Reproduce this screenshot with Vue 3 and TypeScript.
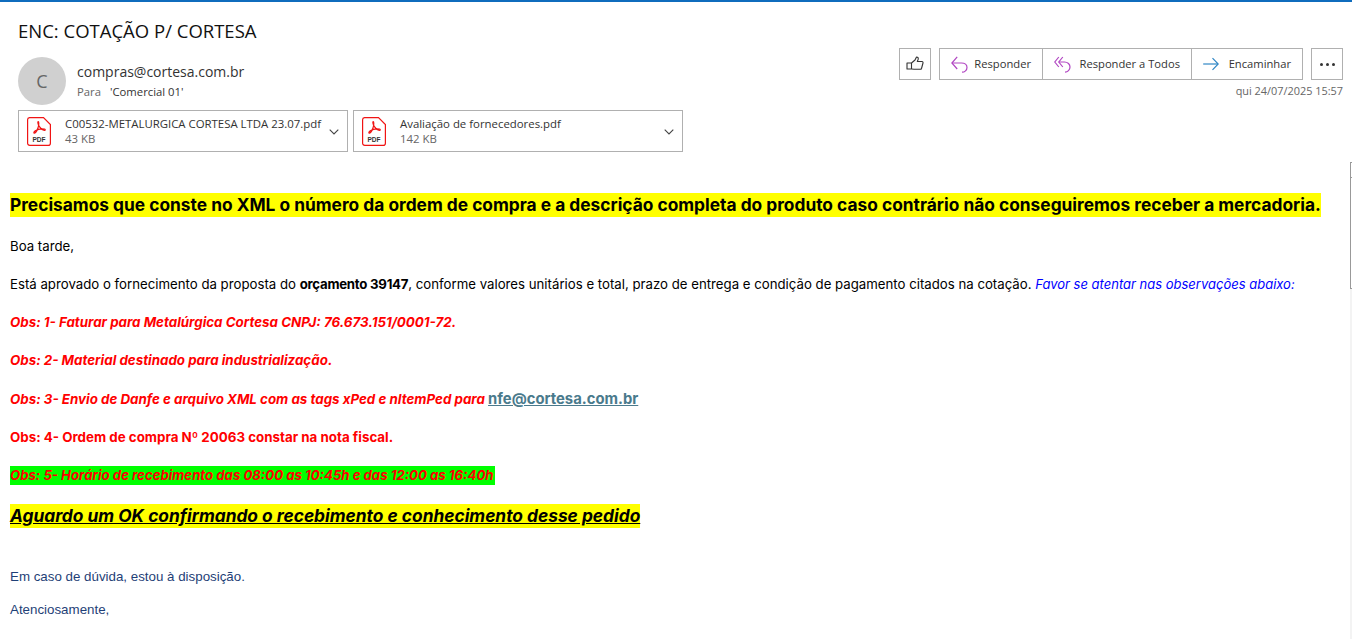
<script setup lang="ts">
interface Att { name: string; size: string }
const atts: Att[] = [
  { name: 'C00532-METALURGICA CORTESA LTDA 23.07.pdf', size: '43 KB' },
  { name: 'Avaliação de fornecedores.pdf', size: '142 KB' },
]
</script>

<template>
  <div class="page">
    <header class="head">
      <div class="head-left">
        <h1 class="subject">ENC: COTAÇÃO P/ CORTESA</h1>
        <div class="sender">
          <div class="avatar">C</div>
          <div class="who">
            <div class="from">compras@cortesa.com.br</div>
            <div class="to"><span class="para">Para</span><span>'Comercial 01'</span></div>
          </div>
        </div>
      </div>
      <div class="head-right">
        <div class="actions">
          <button class="btn square">
            <svg width="18" height="16" viewBox="0 0 18 16" fill="#fafafa" stroke="#333" stroke-width="1.1" stroke-linejoin="round"><path d="M1 7h4.500l3.500-3 1.500-3c1.500 0 2 1 1.700 2.200L11.300 5.500H16c.8 0 1.200.8 1 1.500l-1.500 5.500c-.2.600-.6.800-1.200.8H8L5.500 13H1z"/><path d="M5.500 7v6"/></svg>
          </button>
          <div class="group">
            <button class="btn seg s1">
              <svg width="17" height="17" viewBox="0 0 17 17" fill="none" stroke="#b146c2" stroke-width="1.200"><path d="M6.200 .8 .9 7l5.300 6"/><path d="M.9 7H10.500c3.300 0 5.500 2 5.500 4.400 0 2.700-2.300 4.800-5 4.800"/></svg>
              <span>Responder</span>
            </button>
            <button class="btn seg s2">
              <svg width="17" height="17" viewBox="0 0 17 17" fill="none" stroke="#b146c2" stroke-width="1.200"><path d="M4.800 1 .8 6l4 5"/><path d="M8.800 1 4.800 6l4 5"/><path d="M4.800 6H10.500c3.300 0 5.500 2.400 5.500 5 0 2.800-2.300 5.200-5 5.200"/></svg>
              <span>Responder a Todos</span>
            </button>
            <button class="btn seg s3">
              <svg width="16" height="14" viewBox="0 0 16 14" fill="none" stroke="#2f86c5" stroke-width="1.200"><path d="M.2 7H15"/><path d="M9.500 1.200 15.200 7l-5.700 5.800"/></svg>
              <span>Encaminhar</span>
            </button>
          </div>
          <button class="btn square more" aria-label="Mais"><i></i><i></i><i></i></button>
        </div>
        <div class="date">qui 24/07/2025 15:57</div>
      </div>
    </header>

    <div class="attachments">
      <div v-for="a in atts" :key="a.name" class="att">
        <svg class="pdf" width="24" height="29" viewBox="0 0 24 29" fill="none">
          <path d="M2.500 .6H16.500L23.400 7.500V26.200a2.200 2.200 0 0 1-2.200 2.200H2.800A2.200 2.200 0 0 1 .6 26.200V2.800A2.200 2.200 0 0 1 2.500 .6z" fill="#fff" stroke="#f01414" stroke-width="1.200"/>
          <path d="M11.300 4.500c-.8 0-.5 2.800 1.100 5.200 1.300 1.900 3.400 3.700 4.900 3.800 1.200.1 1.300-1 .2-1.300-2.500-.6-7 .3-9.200 1.600-1.800 1.200-1.700 2.500-.8 2.300 1.100-.3 3.200-3.500 4-7 .4-1.800.4-4.600-.2-4.600z" stroke="#f01414" stroke-width="1.200" fill="none"/>
          <text x="12" y="24.500" text-anchor="middle" class="pdf-t">PDF</text>
        </svg>
        <div class="att-text">
          <div class="att-name">{{ a.name }}</div>
          <div class="att-size">{{ a.size }}</div>
        </div>
        <svg class="chev" width="10" height="6" viewBox="0 0 10 6" fill="none" stroke="#444" stroke-width="1.100"><path d="M.7.7 5 5 9.300.7"/></svg>
      </div>
    </div>

    <div class="scroll-track"></div>
    <div class="scroll-thumb"><span class="notch"></span></div>

    <main class="body">
      <p class="big"><mark>Precisamos que conste no XML o número da ordem de compra e a descrição completa do produto caso contrário não conseguiremos receber a mercadoria.</mark></p>
      <p class="reg">Boa tarde,</p>
      <p class="reg">Está aprovado o fornecimento da proposta do <b>orçamento 39147</b>, conforme valores unitários e total, prazo de entrega e condição de pagamento citados na cotação. <em class="blue">Favor se atentar nas observações abaixo:</em></p>
      <p class="obs"><em>Obs: 1- Faturar para Metalúrgica Cortesa CNPJ: 76.673.151/0001-72.</em></p>
      <p class="obs"><em>Obs: 2- Material destinado para industrialização.</em></p>
      <p class="obs with-link"><em>Obs: 3- Envio de Danfe e arquivo XML com as tags xPed e nItemPed para</em> <a class="link">nfe@cortesa.com.br</a></p>
      <p class="obs">Obs: 4- Ordem de compra Nº 20063 constar na nota fiscal.</p>
      <p class="obs"><em class="green">Obs: 5- Horário de recebimento das 08:00 as 10:45h e das 12:00 as 16:40h</em></p>
      <p class="big ok"><mark>Aguardo um OK confirmando o recebimento e conhecimento desse pedido</mark></p>
      <p class="sign first">Em caso de dúvida, estou à disposição.</p>
      <p class="sign">Atenciosamente,</p>
    </main>
  </div>
</template>

<style>
html, body { margin: 0; background: #fff; overflow: hidden; }
</style>

<style scoped>
.page {
  position: relative;
  width: 1352px;
  height: 639px;
  overflow: hidden;
  box-sizing: border-box;
  border-top: 2px solid #0f6cbd;
  font-family: "Open Sans", "Noto Sans", sans-serif;
  color: #222;
}
.head { display: flex; justify-content: space-between; padding: 0 9px 0 18px; }
.subject { margin: 17px 0 0; font-size: 18.500px; font-weight: 400; line-height: 24px; color: #111; }
.sender { display: flex; align-items: center; margin-top: 14px; gap: 11px; }
.avatar {
  width: 48px; height: 48px; border-radius: 50%; background: #d0d0d0; color: #666;
  display: flex; align-items: center; justify-content: center; font-size: 18px;
}
.from { font-size: 14px; line-height: 20px; color: #333; }
.to { font-size: 11.300px; line-height: 16px; color: #333; margin-top: 2px; display: flex; gap: 9px; }
.para { color: #666; }
.head-right { display: flex; flex-direction: column; align-items: flex-end; padding-top: 46px; }
.actions { display: flex; gap: 8px; }
.btn {
  height: 32px; box-sizing: border-box; background: #fff; border: 1px solid #b0b0b0;
  font: inherit; font-size: 11.200px; color: #333; display: flex; align-items: center; padding: 0;
}
.btn span { padding-bottom: 1px; }
.square { width: 32px; justify-content: center; }
.group { display: flex; }
.seg { border-left-width: 0; justify-content: space-between; }
.seg:first-child { border-left-width: 1px; }
.s1 { width: 104px; padding: 0 11px; }
.s2 { width: 149px; padding: 0 11px; }
.s3 { width: 111px; padding: 0 11px; }
.more { gap: 3px; }
.more i { width: 3px; height: 3px; border-radius: 50%; background: #333; }
.date { font-size: 10.900px; line-height: 16px; color: #666; margin-top: 3px; }

.attachments { display: flex; gap: 5px; margin: 5px 0 0 18px; }
.att {
  width: 330px; height: 42px; box-sizing: border-box; border: 1px solid #b0b0b0; display: flex; align-items: center;
  padding: 0 8px 0 8px; background: #fff;
}
.pdf { flex: none; }
.pdf-t { font-family: "Liberation Sans", sans-serif; font-size: 6.500px; font-weight: 700; fill: #333; }
.att-text { margin-left: 14px; flex: 1; min-width: 0; }
.att-name { font-size: 11.400px; line-height: 15px; color: #333; white-space: nowrap; }
.att-size { font-size: 11.400px; line-height: 15px; color: #666; }
.chev { flex: none; margin-top: 2px; }

.scroll-track {
  position: absolute; left: 1350px; top: 287px; width: 2px; bottom: 0; background: #f3f3f3;
}
.scroll-thumb {
  position: absolute; left: 1350px; top: 160px; width: 2px; height: 127px; box-sizing: border-box;
  border-left: 1px solid #999; border-top: 1px solid #999; border-bottom: 1px solid #999;
}
.notch { position: absolute; left: 0; top: 14px; width: 1px; height: 1px; background: #999; }

.body { padding: 41px 10px 0; font-family: Inter, "Open Sans", sans-serif; font-size: 13px; color: #000; }
.body p { margin: 0 0 19px; line-height: 19px; white-space: nowrap; }
.body p.reg { font-size: 13.230px; }
.reg b { letter-spacing: -0.25px; }
.reg em { font-size: 13px; }
.body p.big { font-size: 17.340px; font-weight: 700; line-height: 24px; margin-bottom: 20px; }
mark { display: inline-block; background: #ff0; color: #000; }
.blue { color: #0000ff; }
.body p.obs { color: #f00; font-weight: 700; font-size: 13.350px; }
.body p.with-link { margin-top: 20px; }
.green { display: inline-block; background: #0f0; font-size: 13.200px; padding-right: 2px; }
.link { color: #4a7a8c; font-size: 14.800px; text-decoration: underline; }
.ok mark { font-style: italic; text-decoration: underline; }
.body p.sign { font-family: "Liberation Sans", sans-serif; font-size: 13.330px; color: #1f3f77; }
.body p.first { margin-top: 39px; margin-bottom: 14px; }
</style>
